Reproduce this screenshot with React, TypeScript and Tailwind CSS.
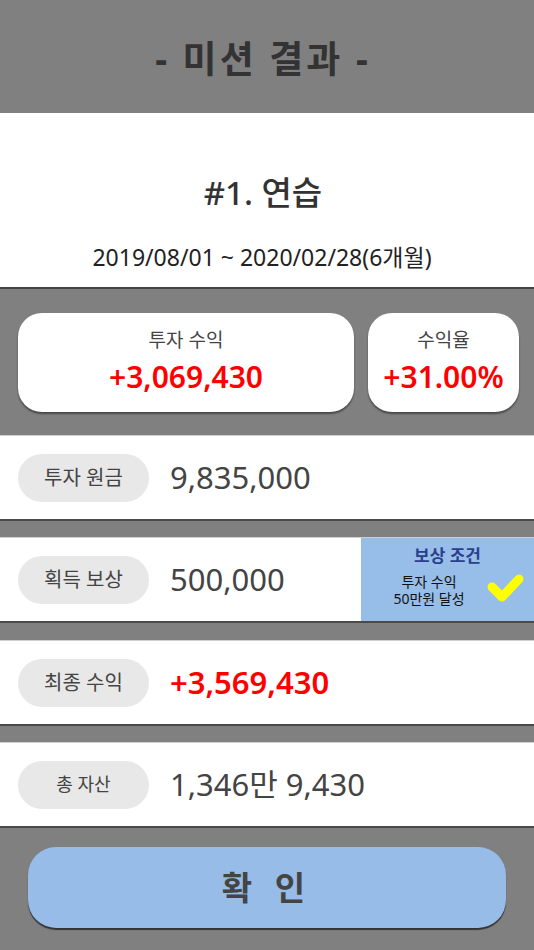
import React from "react";

const font = { fontFamily: '"Noto Sans", "Noto Sans CJK KR", sans-serif' };

const Row: React.FC<{
  label: string;
  value: string;
  red?: boolean;
  small?: boolean;
  className?: string;
  children?: React.ReactNode;
}> = ({ label, value, red, small, className, children }) => (
  <div
    className={`flex h-[86px] items-stretch border-t border-b-2 border-t-[#d0d0d0] border-b-[#4a4a4a] bg-white ${
      className ?? ""
    }`}
  >
    <div className="flex flex-1 items-center pl-[18px]">
      <div
        className={`flex h-[48px] w-[131px] items-center justify-center rounded-full bg-[#e8e8e8] text-[#444] ${
          small ? "text-[18px]" : "text-[20px]"
        }`}
      >
        {label}
      </div>
      <div className={`ml-[21px] text-[31px] ${red ? "font-semibold text-[#ff0000]" : "text-[#444]"}`}>{value}</div>
    </div>
    {children}
  </div>
);

const App: React.FC = () => {
  return (
    <div className="flex h-[950px] w-[534px] flex-col bg-[#808080]" style={font}>
      {/* header */}
      <div className="flex h-[113px] items-center justify-center pt-[4px]">
        <h1 className="mr-[8px] text-[37px] font-bold tracking-[3px] text-[#333]">- 미션 결과 -</h1>
      </div>

      {/* mission title */}
      <div className="flex h-[176px] flex-col items-center border-b-2 border-[#444] bg-white">
        <div className="mr-[8px] mt-[55px] text-[33px] font-medium text-[#333]">#1. 연습</div>
        <div className="mr-[10px] mt-[22px] text-[23px] text-[#222]">2019/08/01 ~ 2020/02/28(6개월)</div>
      </div>

      {/* summary cards */}
      <div className="flex gap-[14px] pl-[18px] pr-[15px] pt-[24px] pb-[23px]">
        <div className="flex h-[99px] w-[336px] flex-col items-center justify-center rounded-[24px] bg-white shadow-[0_2px_2px_rgba(0,0,0,0.45)]">
          <div className="mt-[-4px] text-[19px] text-[#444]">투자 수익</div>
          <div className="mt-[4px] text-[30px] font-semibold leading-tight text-[#ff0000]">+3,069,430</div>
        </div>
        <div className="flex h-[99px] flex-1 flex-col items-center justify-center rounded-[24px] bg-white shadow-[0_2px_2px_rgba(0,0,0,0.45)]">
          <div className="mt-[-4px] text-[19px] text-[#444]">수익율</div>
          <div className="mt-[4px] text-[30px] font-semibold leading-tight text-[#ff0000]">+31.00%</div>
        </div>
      </div>

      {/* rows */}
      <div className="flex flex-col">
        <Row label="투자 원금" value="9,835,000" />
        <Row label="획득 보상" value="500,000" className="mt-[16px]">
          <div className="flex w-[173px] flex-col bg-[#97bde9]">
            <div className="mt-[5px] text-center text-[17px] font-bold text-[#2b3f8c]">보상 조건</div>
            <div className="mt-[4px] flex items-center">
              <div className="ml-[28px] flex w-[80px] flex-col items-center text-[14px] text-[#111]">
                <div className="leading-[17px]">투자 수익</div>
                <div className="leading-[17px]">50만원 달성</div>
              </div>
              <svg width="40" height="36" viewBox="0 0 40 36" className="ml-[17px] mt-[-4px]">
                <polyline
                  points="6,17 16,27 33,9"
                  fill="none"
                  stroke="#ffff00"
                  strokeWidth="9"
                  strokeLinecap="round"
                  strokeLinejoin="round"
                />
              </svg>
            </div>
          </div>
        </Row>
        <Row label="최종 수익" value="+3,569,430" red className="mt-[17px]" />
        <Row label="총 자산" value="1,346만 9,430" small className="mt-[16px]" />
      </div>

      {/* confirm button */}
      <div className="flex flex-1 items-start justify-center pt-[19px]">
        <button className="flex h-[81px] w-[478px] items-center justify-center rounded-[28px] bg-[#97bce8] text-[33px] font-bold tracking-[7px] text-[#444] shadow-[0_2px_1px_rgba(0,0,0,0.6)]">
          확 인
        </button>
      </div>
    </div>
  );
};

export default App;
